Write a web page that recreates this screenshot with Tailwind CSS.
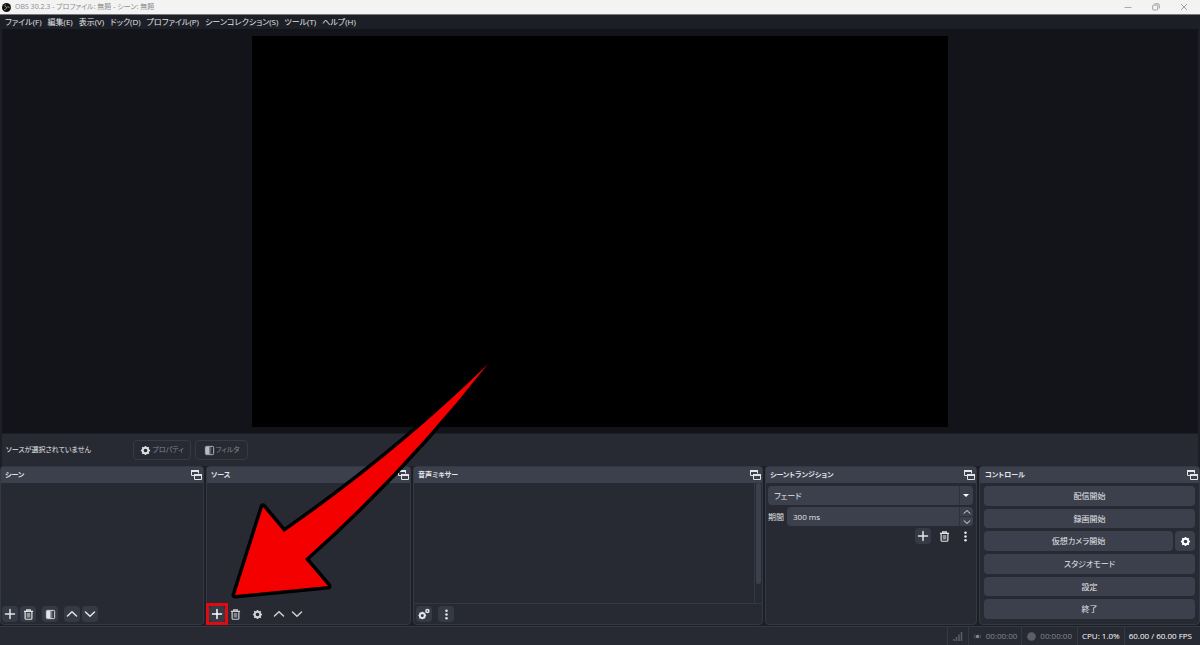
<!DOCTYPE html>
<html lang="ja">
<head>
  <meta charset="UTF-8" />
  <meta name="viewport" content="width=device-width, initial-scale=1.0" />
  <title>OBS 30.2.3 - プロファイル: 無題 - シーン: 無題</title>
  <script src="https://cdn.jsdelivr.net/npm/@tailwindcss/browser@4"></script>
</head>
<body class="relative flex flex-col h-screen overflow-hidden bg-[#1d1f27] text-[#e4e5e8] text-[8px] leading-3 font-['Open_Sans','Noto_Sans_CJK_JP',sans-serif] [font-feature-settings:'palt']">

  <!-- Icons -->
  <svg class="hidden">
    <symbol id="plus" viewBox="0 0 12 12"><path d="M6 1.5v9M1.5 6h9" fill="none" stroke="currentColor" stroke-width="1.5" stroke-linecap="round" /></symbol>
    <symbol id="trash" viewBox="0 0 12 12"><path d="M1 2.500h10M4 2.200V1h4v1.200M2.300 2.500v7.500q0 1.200 1.200 1.200h5q1.200 0 1.200-1.200V2.500" fill="none" stroke="currentColor" stroke-width="1.300" /><path d="M4 4.300h4v5H4z" fill="currentColor" opacity=".55" /></symbol>
    <symbol id="filter" viewBox="0 0 12 12"><rect x="1.500" y="1.500" width="9" height="9" rx="1" fill="none" stroke="currentColor" /><path d="M2 2h4v8H2z" fill="currentColor" /><path d="M6 2h2v8H6z" fill="currentColor" opacity=".35" /></symbol>
    <symbol id="up" viewBox="0 0 12 12"><path d="M1.500 8 6 3.800 10.500 8" fill="none" stroke="currentColor" stroke-width="1.500" stroke-linecap="round" /></symbol>
    <symbol id="down" viewBox="0 0 12 12"><path d="M1.500 4 6 8.200 10.500 4" fill="none" stroke="currentColor" stroke-width="1.500" stroke-linecap="round" /></symbol>
    <symbol id="gear" viewBox="0 0 12 12"><circle cx="6" cy="6" r="3.100" fill="none" stroke="currentColor" stroke-width="2.200" /><path d="M6 1v2M6 9v2M1 6h2M9 6h2M2.500 2.500l1.200 1.200M8.300 8.300l1.200 1.200M2.500 9.500l1.200-1.200M8.300 3.700l1.200-1.200" stroke="currentColor" stroke-width="1.700" /></symbol>
    <symbol id="gears" viewBox="0 0 12 12"><circle cx="4.300" cy="7.500" r="2.500" fill="none" stroke="currentColor" stroke-width="2" /><path d="M4.300 3.700v1M4.300 10.300v1M.5 7.500h1M7.100 7.500h1M1.600 4.800l.7.700M7 10.200l-.7-.7M1.600 10.200l.7-.7M7 4.800l-.7.700" stroke="currentColor" /><circle cx="9.400" cy="3" r="1.500" fill="none" stroke="currentColor" stroke-width="1.500" /></symbol>
    <symbol id="dots" viewBox="0 0 12 12"><circle cx="6" cy="2" r="1.400" fill="currentColor" /><circle cx="6" cy="6" r="1.400" fill="currentColor" /><circle cx="6" cy="10" r="1.400" fill="currentColor" /></symbol>
    <symbol id="popout" viewBox="0 0 12 12"><path d="M4 6.500H1.500V1.500h7v3" fill="none" stroke="currentColor" /><path d="M1 1h8v2H1z" fill="currentColor" /><path d="M4.500 5.500h7v5h-7z" fill="none" stroke="currentColor" /><path d="M4 5h8v2H4z" fill="currentColor" /></symbol>
  </svg>

  <!-- Title bar -->
  <header class="flex items-center h-[15px] shrink-0 pl-[2px] pr-3 bg-[#f3f3f3] border-b border-[#77787c] text-[#8b8b8b]">
    <svg class="size-[9px] mr-1" viewBox="0 0 18 18"><circle cx="9" cy="9" r="9" fill="#111" /><path d="M9 9C6 8 5 5 7 3M9 9c2-2 5-2 6 1M9 9c0 3-3 5-5 4" fill="none" stroke="#b5b5b5" stroke-width="1.500" /></svg>
    <span class="text-[7px]">OBS 30.2.3 - プロファイル: 無題 - シーン: 無題</span>
    <div class="flex gap-5 ml-auto">
      <button aria-label="最小化"><svg class="size-2" viewBox="0 0 8 8"><path d="M.5 4.500h7" stroke="#a8a8a8" /></svg></button>
      <button aria-label="元に戻す"><svg class="size-2" viewBox="0 0 8 8" fill="none" stroke="#a0a0a0"><rect x=".7" y="2" width="5" height="5" rx="1" /><path d="M2.500.8H6q1.300 0 1.300 1.300v3.400" /></svg></button>
      <button aria-label="閉じる"><svg class="size-2" viewBox="0 0 8 8"><path d="m1 1 6 6M7 1 1 7" stroke="#a0a0a0" /></svg></button>
    </div>
  </header>

  <!-- Menu -->
  <nav class="flex items-center h-[14px] shrink-0 gap-[6px] px-[5px] whitespace-nowrap">
    <a href="#">ファイル(F)</a>
    <a href="#">編集(E)</a>
    <a href="#">表示(V)</a>
    <a href="#">ドック(D)</a>
    <a href="#">プロファイル(P)</a>
    <a href="#">シーンコレクション(S)</a>
    <a href="#">ツール(T)</a>
    <a href="#">ヘルプ(H)</a>
  </nav>

  <!-- Preview -->
  <main class="flex justify-center flex-1 min-h-0 mx-[2px] pt-[7px] pb-[6px] bg-[#13141a]">
    <div class="h-full aspect-video bg-black"></div>
  </main>

  <!-- Source toolbar -->
  <section class="flex items-center h-[32px] shrink-0 mt-px mx-[2px] pl-1 bg-[#272a33]">
    <span class="w-[127px] text-[7px]">ソースが選択されていません</span>
    <button class="flex items-center justify-center gap-px w-[58px] h-5 mr-1 border border-[#363a45] rounded-sm text-[7px] text-[#858890]"><svg class="size-[11px] text-[#dcdde0]"><use href="#gear" /></svg>プロパティ</button>
    <button class="flex items-center justify-center gap-px w-[53px] h-5 border border-[#363a45] rounded-sm text-[7px] text-[#858890]"><svg class="size-[11px] text-[#b9bbc0]"><use href="#filter" /></svg>フィルタ</button>
  </section>

  <!-- Docks -->
  <div class="grid grid-cols-[204fr_205fr_350fr_212fr_221fr] gap-[2px] h-[159px] shrink-0">
    <section class="flex flex-col min-w-0 bg-[#272a33] border border-[#343843] rounded-sm">
      <h2 class="flex items-center justify-between h-4 pl-1 pr-px bg-[#3c404d] text-[7px] font-semibold">シーン<svg class="size-3"><use href="#popout" /></svg></h2>
      <div class="flex items-center mt-auto h-[20px] pl-px">
        <button class="grid place-items-center size-4 rounded-sm bg-[#363a45]" aria-label="シーンを追加"><svg class="size-3"><use href="#plus" /></svg></button>
        <button class="grid place-items-center size-4 ml-[2px] rounded-sm bg-[#363a45]" aria-label="シーンを削除"><svg class="size-[11px]"><use href="#trash" /></svg></button>
        <button class="grid place-items-center size-4 ml-[6px] rounded-sm bg-[#363a45]" aria-label="シーンフィルタ"><svg class="size-[11px]"><use href="#filter" /></svg></button>
        <button class="grid place-items-center size-4 ml-[6px] rounded-sm bg-[#363a45]" aria-label="シーンを上へ"><svg class="size-3"><use href="#up" /></svg></button>
        <button class="grid place-items-center size-4 ml-[2px] rounded-sm bg-[#363a45]" aria-label="シーンを下へ"><svg class="size-3"><use href="#down" /></svg></button>
      </div>
    </section>

    <section class="flex flex-col min-w-0 bg-[#272a33] border border-[#343843] rounded-sm">
      <h2 class="flex items-center justify-between h-4 pl-1 pr-px bg-[#3c404d] text-[7px] font-semibold">ソース<svg class="size-3"><use href="#popout" /></svg></h2>
      <div class="flex items-center mt-auto h-[20px] pl-[2px] text-[#cfd0d4]">
        <button class="relative grid place-items-center size-4 rounded-sm bg-[#363a45] text-white" aria-label="ソースを追加"><svg class="size-3"><use href="#plus" /></svg><span class="absolute -inset-[3px] border-3 border-[#e00b12]"></span></button>
        <button class="grid place-items-center size-4 ml-[2px]" aria-label="ソースを削除"><svg class="size-[11px]"><use href="#trash" /></svg></button>
        <button class="grid place-items-center size-4 ml-[6px]" aria-label="ソースのプロパティ"><svg class="size-[11px]"><use href="#gear" /></svg></button>
        <button class="grid place-items-center size-4 ml-[6px]" aria-label="ソースを上へ"><svg class="size-3"><use href="#up" /></svg></button>
        <button class="grid place-items-center size-4 ml-[2px]" aria-label="ソースを下へ"><svg class="size-3"><use href="#down" /></svg></button>
      </div>
    </section>

    <section class="flex flex-col min-w-0 bg-[#272a33] border border-[#343843] rounded-sm">
      <h2 class="flex items-center justify-between h-4 pl-1 pr-px bg-[#3c404d] text-[7px] font-semibold">音声ミキサー<svg class="size-3"><use href="#popout" /></svg></h2>
      <div class="flex flex-1 justify-end">
        <div class="w-2 pl-px border-l border-[#343843]"><div class="w-[5px] h-[101px] rounded-sm bg-[#3c404d]"></div></div>
      </div>
      <div class="flex items-center h-[21px] pl-[2px] gap-[6px] border-t border-[#343843]">
        <button class="grid place-items-center size-4 rounded-sm bg-[#363a45]" aria-label="オーディオの詳細設定"><svg class="size-3"><use href="#gears" /></svg></button>
        <button class="grid place-items-center size-4 rounded-sm bg-[#363a45]" aria-label="ミキサーメニュー"><svg class="size-[11px]"><use href="#dots" /></svg></button>
      </div>
    </section>

    <section class="flex flex-col min-w-0 bg-[#272a33] border border-[#343843] rounded-sm">
      <h2 class="flex items-center justify-between h-4 pl-1 pr-px bg-[#3c404d] text-[7px] font-semibold">シーントランジション<svg class="size-3"><use href="#popout" /></svg></h2>
      <div class="flex flex-col gap-[2px] pl-[2px] pr-[3px] pt-[3px]">
        <div class="relative">
          <select class="block appearance-none w-full h-[19px] px-[6px] rounded-sm bg-[#3c404d]" aria-label="トランジション"><option>フェード</option></select>
          <svg class="absolute right-0 top-0 w-[14px] h-[19px] pointer-events-none" viewBox="0 0 14 19"><path d="M.5 0v19" stroke="#2f323d" /><path d="M4 8h6l-3 3z" fill="#fff" /></svg>
        </div>
        <div class="flex items-center">
          <label for="duration" class="w-[19px]">期間</label>
          <div class="relative flex-1">
            <input id="duration" type="text" value="300 ms" class="block w-full h-[19px] px-[6px] rounded-sm bg-[#3c404d]" />
            <div class="absolute right-0 inset-y-0 flex flex-col w-[14px] border-l border-[#2f323d]">
              <button class="grid place-items-center flex-1 border-b border-[#2f323d]" aria-label="増やす"><svg class="size-2"><use href="#up" /></svg></button>
              <button class="grid place-items-center flex-1" aria-label="減らす"><svg class="size-2"><use href="#down" /></svg></button>
            </div>
          </div>
        </div>
        <div class="flex justify-end gap-[5px]">
          <button class="grid place-items-center size-4 rounded-sm bg-[#363a45]" aria-label="トランジションを追加"><svg class="size-3"><use href="#plus" /></svg></button>
          <button class="grid place-items-center size-4" aria-label="トランジションを削除"><svg class="size-[11px]"><use href="#trash" /></svg></button>
          <button class="grid place-items-center size-4" aria-label="トランジションメニュー"><svg class="size-[11px]"><use href="#dots" /></svg></button>
        </div>
      </div>
    </section>

    <section class="flex flex-col min-w-0 bg-[#272a33] border border-[#343843] rounded-sm">
      <h2 class="flex items-center justify-between h-4 pl-[5px] pr-px bg-[#3c404d] text-[7px] font-semibold">コントロール<svg class="size-3"><use href="#popout" /></svg></h2>
      <div class="flex flex-col flex-1 gap-[3px] px-1 pt-[3px] pb-[5px]">
        <button class="flex-1 rounded-sm bg-[#3c404d]">配信開始</button>
        <button class="flex-1 rounded-sm bg-[#3c404d]">録画開始</button>
        <div class="flex flex-1 gap-[2px]">
          <button class="flex-1 rounded-sm bg-[#3c404d]">仮想カメラ開始</button>
          <button class="grid place-items-center w-5 rounded-sm bg-[#3c404d]" aria-label="仮想カメラの設定"><svg class="size-[11px] text-white"><use href="#gear" /></svg></button>
        </div>
        <button class="flex-1 rounded-sm bg-[#3c404d]">スタジオモード</button>
        <button class="flex-1 rounded-sm bg-[#3c404d]">設定</button>
        <button class="flex-1 rounded-sm bg-[#3c404d]">終了</button>
      </div>
    </section>
  </div>

  <!-- Status bar -->
  <footer class="flex justify-end h-[19px] shrink-0 mt-px bg-[#272a33] border-t border-[#343843] whitespace-nowrap text-[#858890]">
    <div class="flex items-center px-1 border-l border-[#343843]"><svg class="size-3" viewBox="0 0 12 12" stroke="#5b5e68" stroke-width="1.500"><path d="M2 11V9M4.500 11V7M7 11V4.500M9.500 11V2" /></svg></div>
    <div class="flex items-center gap-1 px-1 border-l border-[#343843]"><svg class="size-[9px]" viewBox="0 0 10 10"><circle cx="5" cy="5" r="1.900" fill="#858890" /><path d="M2.300 3q-1.500 2 0 4M7.700 3q1.500 2 0 4" fill="none" stroke="#5b5e68" /></svg>00:00:00</div>
    <div class="flex items-center gap-1 px-[5px] border-l border-[#343843]"><svg class="size-[9px]" viewBox="0 0 10 10"><circle cx="5" cy="5" r="4.800" fill="#5b5e68" /></svg>00:00:00</div>
    <div class="flex items-center px-1 border-l border-[#343843] text-white">CPU: 1.0%</div>
    <div class="flex items-center pl-1 pr-2 border-l border-[#343843] text-white">60.00 / 60.00 FPS</div>
  </footer>

  <!-- Arrow to the add-source button -->
  <svg class="absolute left-[225px] bottom-[40px] w-[270px] h-[245px] pointer-events-none" viewBox="225 360 270 245">
    <path d="M488 364Q396 454 284 532L263 507 235 595 328 586 305 559Q403 472 488 364Z" fill="#f50000" stroke="#000" stroke-width="7" stroke-linejoin="round" paint-order="stroke" />
  </svg>
</body>
</html>
